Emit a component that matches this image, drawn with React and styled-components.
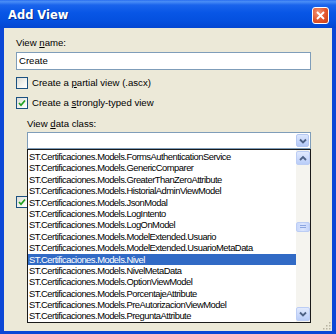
import styled, { createGlobalStyle } from "styled-components";

const GlobalStyle = createGlobalStyle`
  html, body {
    margin: 0;
    padding: 0;
    background: #0b47d6;
  }
  body {
    font-family: "Liberation Sans", Arial, sans-serif;
    font-size: 10px;
    color: #000;
  }
`;

const classes = [
  "FormsAuthenticationService",
  "GenericComparer",
  "GreaterThanZeroAttribute",
  "HistorialAdminViewModel",
  "JsonModal",
  "LogIntento",
  "LogOnModel",
  "ModelExtended.Usuario",
  "ModelExtended.UsuarioMetaData",
  "Nivel",
  "NivelMetaData",
  "OptionViewModel",
  "PorcentajeAttribute",
  "PreAutorizacionViewModel",
  "PreguntaAttribute",
];

function Chevron({ up }) {
  return (
    <svg width="8" height="6" viewBox="0 0 8 6">
      <path
        d={up ? "M1 5 L4 2 L7 5" : "M1 1.5 L4 4.5 L7 1.5"}
        fill="none"
        stroke="#4d6185"
        strokeWidth="1.8"
      />
    </svg>
  );
}

function CheckMark() {
  return (
    <svg width="8" height="8" viewBox="0 0 8 8">
      <path d="M1 4 L3 6.2 L7 1.5" fill="none" stroke="#21a121" strokeWidth="1.7" />
    </svg>
  );
}

function Check({ checked, children }) {
  return (
    <CheckRow>
      <Box>{checked && <CheckMark />}</Box>
      {children && <span>{children}</span>}
    </CheckRow>
  );
}

export default function App() {
  return (
    <>
      <GlobalStyle />
      <Window>
        <TitleBar>
          <Title>Add View</Title>
          <CloseButton>
            <svg width="9" height="9" viewBox="0 0 9 9">
              <path d="M1 1 L8 8 M8 1 L1 8" stroke="#fff" strokeWidth="1.8" />
            </svg>
          </CloseButton>
        </TitleBar>
        <Body>
          <Label>
            View <u>n</u>ame:
          </Label>
          <TextBox>Create</TextBox>
          <Check>
            Create a <u>p</u>artial view (.ascx)
          </Check>
          <Check checked>
            Create a <u>s</u>trongly-typed view
          </Check>
          <Indent>
            <Label>
              View <u>d</u>ata class:
            </Label>
            <ComboWrap>
              <Combo>
                <ComboButton>
                  <Chevron />
                </ComboButton>
              </Combo>
              <List>
                <Items>
                  {classes.map((c) => (
                    <Item key={c} selected={c === "Nivel"}>
                      ST.Certificaciones.Models.{c}
                    </Item>
                  ))}
                </Items>
                <ScrollBar>
                  <ScrollButton>
                    <Chevron up />
                  </ScrollButton>
                  <Track>
                    <Thumb>
                      <Grip />
                    </Thumb>
                  </Track>
                  <ScrollButton>
                    <Chevron />
                  </ScrollButton>
                </ScrollBar>
              </List>
            </ComboWrap>
          </Indent>
          {/* "Select master page" row, covered by the open list */}
          <HiddenRow>
            <Check checked />
          </HiddenRow>
          <ResizeGrip>
            <svg width="10" height="10" viewBox="0 0 10 10">
              {[
                [8, 2],
                [8, 5],
                [5, 5],
                [8, 8],
                [5, 8],
                [2, 8],
              ].map(([x, y]) => (
                <rect key={x + "-" + y} x={x} y={y} width="1.5" height="1.5" fill="#b8b4a2" />
              ))}
            </svg>
          </ResizeGrip>
        </Body>
      </Window>
    </>
  );
}

const Window = styled.div`
  width: 336px;
  height: 334px;
  display: flex;
  flex-direction: column;
  overflow: hidden;
`;

const TitleBar = styled.div`
  height: 28px;
  flex: none;
  display: flex;
  align-items: center;
  justify-content: space-between;
  padding: 0 7px 0 8px;
  box-sizing: border-box;
  background: linear-gradient(
    to bottom,
    #2a6ef0 0%,
    #4a8ef6 6%,
    #1a64ec 18%,
    #0856e6 45%,
    #0450df 75%,
    #0346d2 100%
  );
`;

const Title = styled.div`
  color: #fff;
  font-family: "DejaVu Sans", "Liberation Sans", sans-serif;
  font-weight: bold;
  font-size: 11.5px;
  text-shadow: 1px 1px 0 #0a2f8c;
  padding-top: 2px;
`;

const CloseButton = styled.div`
  width: 17px;
  height: 17px;
  box-sizing: border-box;
  border: 1px solid #fff;
  border-radius: 3px;
  background: radial-gradient(circle at 35% 30%, #f39475 0%, #e2552c 55%, #c63f14 100%);
  display: flex;
  align-items: center;
  justify-content: center;
  margin-top: 3px;
`;

const Body = styled.div`
  flex: 1;
  position: relative;
  display: flex;
  flex-direction: column;
  align-items: flex-start;
  background: #ece9d8;
  border-left: 4px solid #0b47d6;
  border-right: 4px solid #0b47d6;
  border-bottom: 3px solid #0b47d6;
  padding: 9px 21px 0 12px;
  font-size: 9.6px;
`;

const Label = styled.div`
  height: 12px;
  line-height: 12px;
  u {
    text-decoration: underline;
  }
`;

const TextBox = styled.div`
  align-self: stretch;
  height: 18px;
  box-sizing: border-box;
  margin-top: 3px;
  border: 1px solid #7f9db9;
  background: #fff;
  padding: 0 2px;
  line-height: 16px;
`;

const CheckRow = styled.div`
  display: flex;
  align-items: center;
  gap: 4px;
  height: 13px;
  margin-top: 6px;
  & + & {
    margin-top: 7px;
  }
`;

const Box = styled.div`
  width: 12px;
  height: 12px;
  box-sizing: border-box;
  border: 1px solid #1c5180;
  background: linear-gradient(135deg, #dcdcd7 0%, #f4f4f0 60%, #ffffff 100%);
  display: flex;
  align-items: center;
  justify-content: center;
`;

const Indent = styled.div`
  align-self: stretch;
  display: flex;
  flex-direction: column;
  padding-left: 11px;
  margin-top: 9px;
`;

const ComboWrap = styled.div`
  position: relative;
  margin-top: 2px;
  z-index: 2;
`;

const Combo = styled.div`
  height: 17px;
  box-sizing: border-box;
  border: 1px solid #7f9db9;
  background: #fff;
  display: flex;
  justify-content: flex-end;
  padding: 1px;
`;

const ComboButton = styled.div`
  width: 13px;
  box-sizing: border-box;
  border: 1px solid #b5c8f2;
  border-radius: 2px;
  background: linear-gradient(to bottom, #dce7fd 0%, #c4d5fb 60%, #b3c8f6 100%);
  display: flex;
  align-items: center;
  justify-content: center;
`;

const List = styled.div`
  position: absolute;
  top: 100%;
  left: 0;
  right: 0;
  height: 174px;
  box-sizing: border-box;
  border: 1px solid #1a1a1a;
  background: #fff;
  display: flex;
`;

const Items = styled.div`
  flex: 1;
  padding-top: 1px;
  font-size: 9.4px;
  letter-spacing: -0.5px;
`;

const Item = styled.div`
  height: 11.4px;
  line-height: 11.4px;
  padding-left: 1px;
  white-space: nowrap;
  overflow: hidden;
  background: ${(p) => (p.selected ? "#316ac5" : "transparent")};
  color: ${(p) => (p.selected ? "#fff" : "#000")};
`;

const ScrollBar = styled.div`
  width: 14px;
  display: flex;
  flex-direction: column;
  background: #f5f4ef;
  padding: 1px 0;
`;

const ScrollButton = styled.div`
  height: 14px;
  box-sizing: border-box;
  border: 1px solid #bccdf4;
  border-radius: 2px;
  background: linear-gradient(to bottom, #e1eafd 0%, #c9d8fb 60%, #b9cdf8 100%);
  display: flex;
  align-items: center;
  justify-content: center;
`;

const Track = styled.div`
  flex: 1;
  display: flex;
  flex-direction: column;
`;

const Thumb = styled.div`
  margin-top: 57px;
  height: 10px;
  box-sizing: border-box;
  border: 1px solid #bccdf4;
  border-radius: 2px;
  background: linear-gradient(to right, #c9d8fb 0%, #dbe5fd 50%, #c4d4fa 100%);
  display: flex;
  align-items: center;
  justify-content: center;
`;

const Grip = styled.div`
  width: 6px;
  height: 4px;
  background: repeating-linear-gradient(to bottom, #8ca6e0 0 1px, transparent 1px 2px);
`;

const HiddenRow = styled.div`
  margin-top: 40px;
`;

const ResizeGrip = styled.div`
  position: absolute;
  right: 1px;
  bottom: 1px;
  width: 10px;
  height: 10px;
`;
